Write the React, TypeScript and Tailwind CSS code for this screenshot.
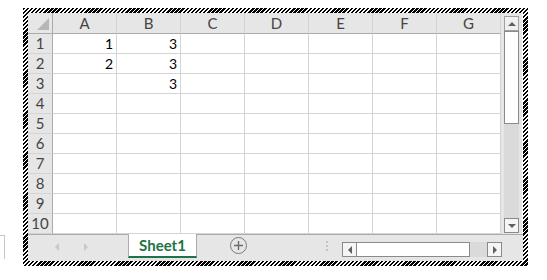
import React from "react"

const cols = ["A", "B", "C", "D", "E", "F", "G"]
const rows = [1, 2, 3, 4, 5, 6, 7, 8, 9, 10]

// values keyed by row + column letter
const cells: Record<string, string> = {
  "1A": "1",
  "1B": "3",
  "2A": "2",
  "2B": "3",
  "3B": "3",
}

function Triangle({ dir, color }: { dir: "up" | "down" | "left" | "right"; color: string }) {
  const points = {
    up: "0,4 4,0 8,4",
    down: "0,0 8,0 4,4",
    left: "4,0 4,8 0,4",
    right: "0,0 0,8 4,4",
  }[dir]
  const size = dir === "up" || dir === "down" ? { w: 8, h: 4 } : { w: 4, h: 8 }
  return (
    <svg width={size.w} height={size.h} viewBox={`0 0 ${size.w} ${size.h}`}>
      <polygon points={points} fill={color} />
    </svg>
  )
}

function Grid() {
  return (
    <div className="grid grid-cols-[25px_repeat(7,64px)] grid-rows-[21px_repeat(10,20px)]">
      <div className="relative border-r border-b border-[#ababab] bg-[#e6e6e6]">
        <svg className="absolute right-[3px] bottom-[3px]" width="12" height="12" viewBox="0 0 12 12">
          <polygon points="12,0 12,12 0,12" fill="#b7b7b7" />
        </svg>
      </div>
      {cols.map((c) => (
        <div
          key={c}
          className="flex items-center justify-center border-r border-b border-r-[#d4d4d4] border-b-[#ababab] bg-[#e6e6e6] pt-[1px] text-[15px] text-[#444]"
        >
          {c}
        </div>
      ))}
      {rows.map((r) => (
        <React.Fragment key={r}>
          <div className="flex items-center justify-center border-r border-b border-r-[#ababab] border-b-[#d4d4d4] bg-[#e6e6e6] text-[15px] text-[#444]">
            {r}
          </div>
          {cols.map((c) => (
            <div
              key={c}
              className="flex items-center justify-end border-r border-b border-[#d4d4d4] bg-white pr-[3px] text-[14px] text-black"
            >
              {cells[`${r}${c}`] ?? ""}
            </div>
          ))}
        </React.Fragment>
      ))}
    </div>
  )
}

function VScroll() {
  return (
    <div className="flex w-[21px] flex-col bg-[#e6e6e6] pt-[3px] pl-[3px] pr-[3px]">
      <div className="flex h-[15px] w-[15px] items-center justify-center border border-[#a0a0a0] bg-[#f0f0f0]">
        <Triangle dir="up" color="#606060" />
      </div>
      <div className="h-[93px] w-[15px] border border-[#8a8a8a] bg-white" />
      <div className="flex-1 bg-[#dadada]" />
      <div className="mb-[1px] flex h-[15px] w-[15px] items-center justify-center border border-[#8a8a8a] bg-[#f5f5f5]">
        <Triangle dir="down" color="#606060" />
      </div>
    </div>
  )
}

function TabBar() {
  return (
    <div className="flex h-[27px] bg-[#e6e6e6]">
      <div className="flex w-[100px] items-start border-t border-[#ababab] pt-[8px]">
        <div className="ml-[27px]">
          <Triangle dir="left" color="#c8c8c8" />
        </div>
        <div className="ml-[25px]">
          <Triangle dir="right" color="#c8c8c8" />
        </div>
      </div>
      <div className="flex h-[24px] w-[69px] items-center justify-center border-x border-b-2 border-x-[#ababab] border-b-[#217346] bg-white text-[15px] font-bold text-[#217346]">
        Sheet1
      </div>
      <div className="flex flex-1 items-start border-t border-[#ababab] pt-[2px]">
        <div className="ml-[33px] flex h-[17px] w-[17px] items-center justify-center rounded-full border border-[#7a7a7a]">
          <svg width="9" height="9" viewBox="0 0 9 9">
            <path d="M4.5 0v9M0 4.5h9" stroke="#6a6a6a" strokeWidth="1.4" />
          </svg>
        </div>
        <div className="mt-[4px] ml-[79px] flex flex-col gap-[2px]">
          <div className="h-[2px] w-[2px] bg-[#c4c4c4]" />
          <div className="h-[2px] w-[2px] bg-[#c4c4c4]" />
          <div className="h-[2px] w-[2px] bg-[#c4c4c4]" />
        </div>
        <div className="mt-[5px] ml-[14px] flex h-[15px]">
          <div className="flex w-[15px] items-center justify-center border border-[#8a8a8a] bg-[#f5f5f5]">
            <Triangle dir="left" color="#606060" />
          </div>
          <div className="w-[113px] border-y border-r border-[#8a8a8a] bg-white" />
          <div className="w-[17px] bg-[#dadada]" />
          <div className="flex w-[15px] items-center justify-center border border-[#8a8a8a] bg-[#f5f5f5]">
            <Triangle dir="right" color="#606060" />
          </div>
        </div>
        <div className="flex-1" />
      </div>
    </div>
  )
}

export default function App() {
  return (
    <div className="flex h-[280px] w-[547px] bg-white font-['Lato','Liberation_Sans',sans-serif]">
      <div className="mt-[235px] h-[24px] w-[5px] border-t border-r border-[#c6c6c6]" />
      <div className="mt-[8px] ml-[18px] h-[258px] w-[505px] bg-[repeating-linear-gradient(135deg,#000_0_1.7px,#fff_1.7px_2.9px)] p-[5px]">
        <div className="flex h-full w-full flex-col bg-white">
          <div className="flex h-[221px]">
            <Grid />
            <VScroll />
          </div>
          <TabBar />
        </div>
      </div>
    </div>
  )
}
